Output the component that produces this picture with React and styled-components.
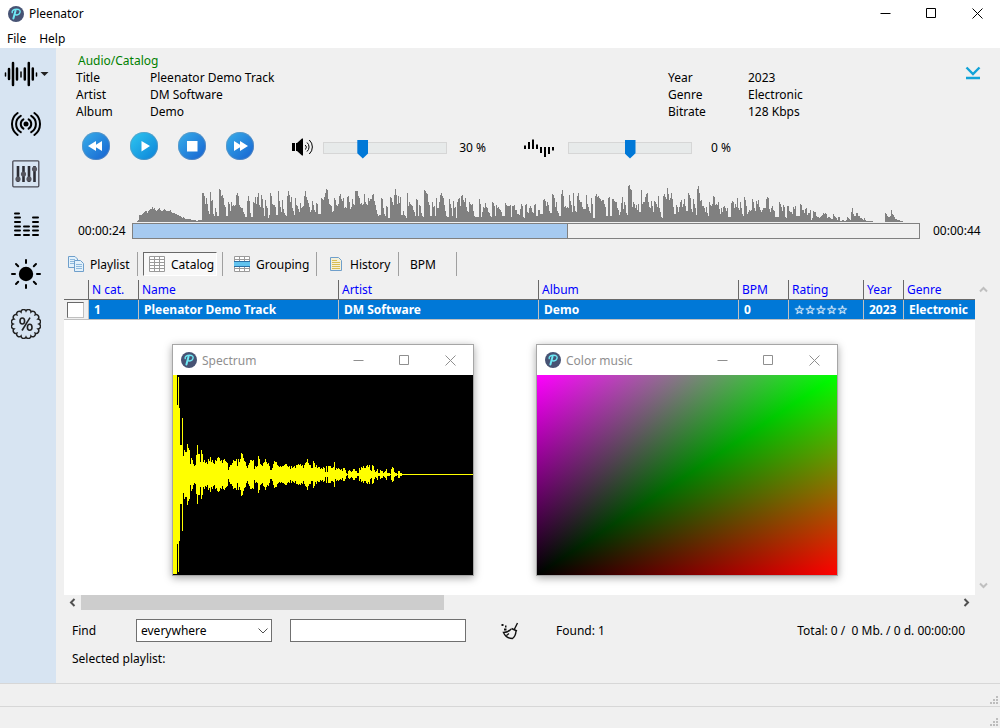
import { useState } from "react"
import styled, { createGlobalStyle } from "styled-components"

const trackPeaks = [
  [5, [1, 2, 7, 7, 7, 8, 9, 10, 11, 11, 9, 11, 12, 13, 13, 15, 13, 14, 12, 11, 12, 13, 14, 12, 11, 11, 12, 13, 12, 11, 11, 11, 11, 12, 10, 9, 9, 9, 8, 8, 7, 7, 6, 6, 5, 4, 5, 4, 3, 3, 3, 3, 3, 3, 2, 2, 2, 2, 2, 1, 1, 2, 2, 2]],
  [70, [29, 29, 26, 18, 24, 18, 11, 8]],
  [78, [30, 21, 22, 8, 6, 14, 10, 6, 6]],
  [87, [33, 32, 26, 27, 24, 17, 15, 6, 6, 20, 18, 11, 20, 16, 17, 16]],
  [103, [17, 27, 29, 26, 17, 15, 14, 14, 10, 8, 5, 5, 21, 20, 5, 5]],
  [116, [26, 21, 9, 5, 5, 20, 19, 25, 18, 15]],
  [125, [25, 29, 17, 15, 27, 23, 14, 6]],
  [133, [22, 16, 14, 4, 7, 29, 26, 18, 17, 17, 15, 7, 7]],
  [146, [31, 21, 15, 10, 22, 13, 9, 7, 6]],
  [155, [26, 31, 27, 20, 25, 14, 11, 7, 24, 17, 16, 13, 9]],
  [167, [10, 19, 14, 15, 16, 26, 31, 25, 22, 19, 15, 10, 12, 21, 20]],
  [181, [17, 12, 10, 19, 18, 8, 8]],
  [189, [24, 23, 22, 25, 29, 33, 32, 23, 18, 17, 16, 10, 11]],
  [202, [24, 22, 17, 16, 18, 26, 28, 23, 21, 24]],
  [212, [14, 15, 14, 25, 26, 20, 13, 15, 23, 18, 17]],
  [223, [31, 31, 31, 26, 24, 18, 19, 17, 18]],
  [232, [28, 20, 18, 17, 24, 21, 23, 23, 27, 28, 21, 17, 12, 8, 6, 7]],
  [249, [24, 23, 14, 8, 6, 16, 15, 4, 4]],
  [258, [25, 24, 20, 17, 27, 33, 27, 18, 26, 19]],
  [268, [25, 7, 7, 11, 7, 6, 4]],
  [275, [29, 16, 20, 18, 17, 16, 12, 10, 6]],
  [284, [23, 22, 6, 17, 16, 9, 6, 5]],
  [292, [32, 31, 29, 28, 20, 17, 6, 6, 20, 15, 16, 6]],
  [304, [24, 14, 14, 20, 27, 29, 26, 24, 17, 11, 6, 5]],
  [317, [23, 18, 14, 6, 21, 14, 15, 4, 20]],
  [326, [23, 24, 16, 26, 27, 22, 20, 24, 15, 11, 10, 20, 18, 17, 18, 11, 6, 5]],
  [347, [23, 18, 5, 10, 15, 14, 19, 15, 14, 10, 9, 6, 5]],
  [360, [20, 19, 16, 6, 17, 14, 15, 13, 12, 10, 6]],
  [373, [19, 17, 16, 16, 16, 17, 5, 16, 16, 17, 12, 12, 8, 8, 7]],
  [388, [13, 18, 16, 5, 4, 17, 18, 10, 9, 14, 16, 14, 10, 9]],
  [402, [17, 18, 6, 6, 12, 12, 8, 8]],
  [411, [22, 23, 21, 16, 20, 17, 11, 9]],
  [420, [28, 27, 24, 15, 20, 11, 9, 6, 6]],
  [429, [28, 32, 26, 15, 16, 14, 15, 14, 27, 21, 17, 10]],
  [441, [29, 16, 11, 10, 26, 29, 22, 20, 20, 15, 13, 13]],
  [454, [27, 18, 15, 11, 9, 24, 18, 4, 4]],
  [463, [26, 28, 25, 26, 24, 23, 21, 22, 22, 18, 15, 6, 6, 24, 25, 6, 6]],
  [480, [23, 23, 21, 20, 20, 14, 12, 7, 10]],
  [489, [19, 25, 13, 20, 17, 9, 7]],
  [496, [36, 37, 33, 32, 15, 20, 18, 14, 17, 12, 18, 10, 10]],
  [509, [32, 18, 20, 20, 25, 28, 29, 20, 15, 14, 21, 16, 10]],
  [522, [21, 20, 18, 15, 26, 14, 10, 5, 4]],
  [531, [26, 28, 25, 23, 34, 28, 22, 24, 29, 23, 15, 8]],
  [544, [17, 15, 10, 15, 20, 22, 15, 18, 23, 16, 11]],
  [556, [29, 27, 24, 13, 10, 23, 18, 14, 7, 5]],
  [565, [33, 36, 29, 21, 22, 16, 16, 14, 10, 15, 9, 6, 20, 17, 16]],
  [580, [18, 26, 25, 17, 18, 17, 20, 13, 8, 14, 10]],
  [591, [15, 16, 14, 11, 14, 5, 5, 5, 19, 21, 20, 14, 18, 15, 24]],
  [606, [14, 12, 20, 14, 8, 6, 25, 22, 16, 8, 10, 12, 11, 12, 23, 20]],
  [622, [14, 11, 21, 18, 22, 15, 12, 10, 12, 14]],
  [634, [23, 25, 24, 13, 10, 14, 16, 12, 11, 5, 5, 5]],
  [647, [20, 18, 15, 11, 17, 15, 5, 4, 16, 16, 11, 10, 10]],
  [660, [8, 15, 13, 16, 6, 6, 6, 6, 18, 17, 12, 12, 9, 13, 14, 7, 9, 9, 12, 2]],
  [680, [4, 11, 10, 10, 6, 5, 5, 4, 5, 6, 7, 9, 8, 9, 8, 4, 5, 5, 4, 3]],
  [701, [8, 6, 5, 4, 2, 5, 5, 1, 1, 2, 2, 1, 1, 2, 5, 4, 3, 2]],
  [719, [10, 14, 8, 6, 6, 9, 9, 6, 6, 4, 4, 3, 2, 4, 2, 1, 1, 1, 1, 1, 1, 1]],
  [741, [0]],
  [753, [9, 8, 6, 5, 5, 6, 12, 8, 7, 5, 3, 3, 2, 2, 2, 1, 1, 1, 0]],
]

const spectrumLevels = [
  99, 99, 99, 99, 69, 97, 66, 29, 29, 56, 18, 24, 22, 22, 30, 26, 24, 10, 16, 14, 10, 8, 9,
  19, 29, 20, 20, 12, 24, 20, 12, 14, 11, 12, 10, 15, 13, 17, 12, 14, 11, 10, 14, 13, 16, 17, 16,
  13, 14, 11, 14, 15, 13, 12, 11, 4, 7, 9, 9, 11, 14, 13, 13, 15, 8, 15, 12, 15, 21, 20,
  16, 13, 12, 8, 6, 9, 11, 14, 14, 13, 14, 5, 8, 7, 8, 18, 15, 10, 9, 8, 11, 12, 15, 12, 10, 11,
  8, 4, 4, 6, 10, 13, 12, 12, 9, 8, 7, 8, 7, 8, 8, 9, 10, 10, 8, 7, 8, 5, 8, 6, 7, 8, 6, 9, 9,
  10, 9, 10, 8, 9, 6, 9, 11, 12, 15, 11, 9, 9, 6, 6, 13, 11, 7, 9, 6, 7, 7, 5, 6, 5, 7, 6,
  2, 8, 2, 8, 8, 8, 6, 6, 7, 12, 4, 6, 5, 6, 5, 4, 5, 3, 6, 6, 4, 1, 0, 3, 4, 3, 2, 3, 5, 5,
  3, 3, 1, 1, 6, 4, 7, 6, 8, 6, 6, 8, 9, 7, 9, 4, 3, 9, 8, 4, 2, 3, 5, 1, 1, 4, 3, 3, 1, 2, 3,
  5, 1, 1, 1, 0, 5, 7, 6, 2, 1, 1, 0, 3, 3, 1, 1, 0,
]

// every block holds its last level until the next block starts
function wavePath() {
  let d = "M0 39"
  trackPeaks.forEach(([start, levels], i) => {
    const end = i + 1 < trackPeaks.length ? trackPeaks[i + 1][0] : start + levels.length
    for (let x = start; x < end; x++) {
      const h = levels[Math.min(x - start, levels.length - 1)]
      d += `H${x}V${39 - h}`
    }
    d += `H${end}`
  })
  return d + "V39Z"
}

function spectrumPath() {
  return spectrumLevels.map((h, x) => `M${x} ${99 - h}h1V${100 + h}h-1Z`).join("")
}

function scallopPath() {
  const points = 16
  let d = ""
  for (let i = 0; i <= points; i++) {
    const a = (i / points) * Math.PI * 2
    const x = (15 + 13 * Math.cos(a)).toFixed(2)
    const y = (15 + 13 * Math.sin(a)).toFixed(2)
    d += i === 0 ? `M${x} ${y}` : `A2.6 2.6 0 0 1 ${x} ${y}`
  }
  return d + "Z"
}

function Logo() {
  return (
    <svg width="16" height="16" viewBox="0 0 16 16" aria-hidden="true">
      <circle cx="8" cy="8" r="8" fill="#475374" />
      <g fill="none" stroke="#6fe9f5" strokeLinecap="round">
        <path d="M7.6 4.6L5.4 12.6" strokeWidth="2" />
        <path d="M4.2 6.6C3.6 4.4 6 3.2 8.6 3.2C11.4 3.2 12.6 4.6 12 6.4C11.5 8.2 9.6 9.2 7.6 8.8" strokeWidth="1.4" />
      </g>
    </svg>
  )
}

function WindowButtons({ title }) {
  return (
    <Controls>
      <ControlButton aria-label={`Minimize ${title}`}>
        <svg width="11" height="11" viewBox="0 0 11 11">
          <path d="M.5 5.5H10.5" />
        </svg>
      </ControlButton>
      <ControlButton aria-label={`Maximize ${title}`}>
        <svg width="11" height="11" viewBox="0 0 11 11">
          <path d="M.5 .5H9.5V9.5H.5Z" />
        </svg>
      </ControlButton>
      <ControlButton aria-label={`Close ${title}`}>
        <svg width="11" height="11" viewBox="0 0 11 11">
          <path d="M.5 .5L10.5 10.5M10.5 .5L.5 10.5" />
        </svg>
      </ControlButton>
    </Controls>
  )
}

function Arrow({ d, color }) {
  return (
    <svg width="9" height="9" viewBox="0 0 9 9" aria-hidden="true">
      <path d={d} fill="none" stroke={color} strokeWidth="2" />
    </svg>
  )
}

function SideBar() {
  return (
    <Side>
      <SideButton aria-label="Audio">
        <svg width="52" height="30" viewBox="0 0 52 30">
          <path d="M5.5 14V17M21 13V18M36.5 14V17" stroke="#000" strokeWidth="1.5" strokeLinecap="round" />
          <path
            d="M9 10V20M13 4V26M17 9.5V20.5M24.8 9.5V20.5M28.8 4V26M32.8 9.5V20.5"
            stroke="#000"
            strokeWidth="2.5"
            strokeLinecap="round"
          />
          <path d="M40.5 13H48.5L44.5 17Z" fill="#222" />
        </svg>
      </SideButton>
      <SideButton aria-label="Radio">
        <svg width="30" height="30" viewBox="0 0 30 30" fill="none" stroke="#000" strokeWidth="2" strokeLinecap="round">
          <circle cx="15" cy="15" r="2.5" fill="#000" stroke="none" />
          <path d="M12.4 10.3A5.5 5.5 0 0 0 12.4 19.7M17.6 10.3A5.5 5.5 0 0 1 17.6 19.7" />
          <path d="M9.8 6.8A9.5 9.5 0 0 0 9.8 23.2M20.2 6.8A9.5 9.5 0 0 1 20.2 23.2" />
          <path d="M6.6 4A13.6 13.6 0 0 0 6.6 26M23.4 4A13.6 13.6 0 0 1 23.4 26" />
        </svg>
      </SideButton>
      <SideButton aria-label="Mixer">
        <svg width="30" height="30" viewBox="0 0 30 30">
          <rect x="1.8" y="1.8" width="26" height="26" rx="1" fill="none" stroke="#4a4a54" strokeWidth="1.3" />
          <path d="M7 7V23M12.5 7V23M18 7V23M23.5 7V23" stroke="#2c2c34" strokeWidth="2.6" />
          <g fill="#55555e">
            <circle cx="7" cy="20" r="2.6" />
            <circle cx="12.5" cy="15" r="2.6" />
            <circle cx="18" cy="20" r="2.6" />
            <circle cx="23.5" cy="10" r="2.6" />
          </g>
        </svg>
      </SideButton>
      <SideButton aria-label="Spectrum">
        <svg width="30" height="30" viewBox="0 0 30 30" stroke="#000" strokeWidth="2" strokeLinecap="round">
          <path d="M4 4.5H8M4 8.5H9M4 13H9M4 17.5H9M4 21.5H9M4 26H9" />
          <path d="M13 17.5H18M13 21.5H18M13 26H18" />
          <path d="M22 8.5H27M22 13H27M22 17.5H27M22 21.5H27M22 26H27" />
        </svg>
      </SideButton>
      <SideButton aria-label="Color music">
        <svg width="30" height="30" viewBox="0 0 30 30" stroke="#000" strokeWidth="2" strokeLinecap="round">
          <circle cx="15" cy="15" r="7.2" stroke="none" />
          <path d="M15 1V4M15 26V29M1 15H4M26 15H29M5 5L7.2 7.2M22.8 22.8L25 25M25 5L22.8 7.2M7.2 22.8L5 25" />
        </svg>
      </SideButton>
      <SideButton aria-label="Percent">
        <svg width="30" height="30" viewBox="0 0 30 30">
          <path d={scallopPath()} fill="none" stroke="#222" strokeWidth="1.5" />
          <g fill="none" stroke="#222" strokeWidth="1.6">
            <ellipse cx="11.3" cy="12" rx="2.3" ry="3" />
            <ellipse cx="18.7" cy="18.3" rx="2.3" ry="3" />
            <path d="M19 8.7L11 21.5" />
          </g>
        </svg>
      </SideButton>
    </Side>
  )
}

function Transport() {
  const [volume, setVolume] = useState(30)
  const [tempo, setTempo] = useState(0)

  return (
    <TransportRow>
      <RoundButton aria-label="Previous">
        <svg width="28" height="28" viewBox="0 0 28 28">
          <path d="M14 9L6 14L14 19ZM20 9L12 14L20 19Z" />
        </svg>
      </RoundButton>
      <RoundButton $bright aria-label="Play">
        <svg width="28" height="28" viewBox="0 0 28 28">
          <path d="M11.5 9L20 14L11.5 19.5Z" />
        </svg>
      </RoundButton>
      <RoundButton aria-label="Stop">
        <svg width="28" height="28" viewBox="0 0 28 28">
          <rect x="9" y="9" width="10.5" height="10.5" />
        </svg>
      </RoundButton>
      <RoundButton aria-label="Next">
        <svg width="28" height="28" viewBox="0 0 28 28">
          <path d="M8 9L16 14L8 19ZM14 9L22 14L14 19Z" />
        </svg>
      </RoundButton>

      <SliderGroup>
        <SliderIcon htmlFor="volume" aria-label="Volume">
          <svg width="21" height="20" viewBox="0 0 21 20">
            <path d="M0 6H3V14H0ZM4 6H5L10 1.5H11V18.5H10L5 14H4Z" />
            <path d="M13 8A2.6 2.6 0 0 1 13 12.5M15 5.5A6 6 0 0 1 15 14.5M17.3 3A9.5 9.5 0 0 1 17.3 17" fill="none" stroke="#000" />
          </svg>
        </SliderIcon>
        <Range id="volume" type="range" min="0" max="100" value={volume} onChange={(e) => setVolume(+e.target.value)} />
        <SliderValue>{volume} %</SliderValue>
      </SliderGroup>

      <SliderGroup>
        <SliderIcon htmlFor="tempo" aria-label="Tempo">
          <svg width="34" height="20" viewBox="0 0 34 20">
            <path
              d="M1 8.5V12M5 5V12M9 2.5V12M13 7.5V12M17 10V16M21 10V20M25 10V17M29 10V13.5"
              stroke="#000"
              strokeWidth="2"
            />
          </svg>
        </SliderIcon>
        <Range id="tempo" type="range" min="-50" max="50" value={tempo} onChange={(e) => setTempo(+e.target.value)} />
        <SliderValue>{tempo} %</SliderValue>
      </SliderGroup>
    </TransportRow>
  )
}

function GridIcon({ band }) {
  return (
    <svg width="16" height="16" viewBox="0 0 16 16" aria-hidden="true">
      <path
        d="M.5 .5H15.5V15.5H.5ZM.5 3.5H15.5M.5 6.5H15.5M.5 9.5H15.5M.5 12.5H15.5M5.5 .5V15.5M10.5 .5V15.5"
        fill="#fff"
        stroke="#9a9a9a"
      />
      {band && (
        <>
          <rect x="0" y="5" width="16" height="6" fill="#62c3ee" />
          <path d="M0 5.5H16M0 10.5H16" stroke="#2a6fa5" />
        </>
      )}
    </svg>
  )
}

function Tabs() {
  return (
    <TabBar>
      <Tab $width={68}>
        <svg width="16" height="16" viewBox="0 0 16 16" aria-hidden="true">
          <path d="M.5 .5H7L9.5 3V11.5H.5Z" fill="#e3f1fb" stroke="#6f9fcb" />
          <path d="M2 3.5H7M2 5.5H6M2 7.5H6" stroke="#8fb9dc" />
          <path d="M6.5 4.5H12.5L15.5 7.5V15.5H6.5Z" fill="#e3f1fb" stroke="#6f9fcb" />
          <path d="M8 8.5H14M8 10.5H14M8 12.5H14" stroke="#8fb9dc" />
        </svg>
        Playlist
      </Tab>
      <TabDivider />
      <Tab $width={74} $pressed>
        <GridIcon />
        Catalog
      </Tab>
      <TabDivider />
      <Tab $width={83}>
        <GridIcon band />
        Grouping
      </Tab>
      <TabDivider />
      <Tab $width={71}>
        <svg width="16" height="16" viewBox="0 0 16 16" aria-hidden="true">
          <path d="M2.5 1.5H10.5L13.5 4.5V14.5H2.5Z" fill="#f5f0d8" stroke="#6f9fcb" />
          <path d="M4 4.5H9M4 6.5H12M4 8.5H12M4 10.5H12M4 12.5H12" stroke="#d8bd55" />
        </svg>
        History
      </Tab>
      <TabDivider />
      <Tab $width={47}>BPM</Tab>
      <TabDivider />
    </TabBar>
  )
}

function Catalog() {
  return (
    <CatalogArea>
      <TableArea>
        <Table>
          <colgroup>
            <col width="24" />
            <col width="50" />
            <col width="200" />
            <col width="200" />
            <col width="200" />
            <col width="50" />
            <col width="75" />
            <col width="40" />
            <col />
          </colgroup>
          <thead>
            <tr>
              <Th aria-label="Selected" />
              <Th>N cat.</Th>
              <Th>Name</Th>
              <Th>Artist</Th>
              <Th>Album</Th>
              <Th>BPM</Th>
              <Th>Rating</Th>
              <Th>Year</Th>
              <Th>Genre</Th>
            </tr>
          </thead>
          <tbody>
            <tr>
              <CheckCell>
                <Check type="checkbox" aria-label="Select Pleenator Demo Track" />
              </CheckCell>
              <Td>1</Td>
              <Td>Pleenator Demo Track</Td>
              <Td>DM Software</Td>
              <Td>Demo</Td>
              <Td>0</Td>
              <Td>
                <Stars>☆☆☆☆☆</Stars>
              </Td>
              <Td>2023</Td>
              <Td>Electronic</Td>
            </tr>
          </tbody>
        </Table>
      </TableArea>
      <VerticalScroll>
        <Arrow d="M1 6.5L4.5 3L8 6.5" color="#bfbfbf" />
        <Arrow d="M1 2.5L4.5 6L8 2.5" color="#bfbfbf" />
      </VerticalScroll>
    </CatalogArea>
  )
}

function ToolWindow({ title, left, children }) {
  return (
    <Tool $left={left}>
      <ToolTitle>
        <Logo />
        <TitleText>{title}</TitleText>
        <WindowButtons title={title} />
      </ToolTitle>
      {children}
    </Tool>
  )
}

function Grip() {
  return (
    <svg width="8" height="8" viewBox="0 0 8 8" aria-hidden="true">
      <path d="M6 0h2v2h-2zM3 3h2v2h-2zM6 3h2v2h-2zM0 6h2v2h-2zM3 6h2v2h-2zM6 6h2v2h-2z" fill="#bdbdbd" />
    </svg>
  )
}

export default function App() {
  return (
    <Window>
      <GlobalStyle />
      <TitleBar>
        <Logo />
        <TitleText>Pleenator</TitleText>
        <WindowButtons title="Pleenator" />
      </TitleBar>
      <MenuBar>
        <MenuItem>File</MenuItem>
        <MenuItem>Help</MenuItem>
      </MenuBar>

      <Workspace>
        <SideBar />
        <Main>
          <Info>
            <InfoList>
              <Source>Audio/Catalog</Source>
              <dt>Title</dt>
              <dd>Pleenator Demo Track</dd>
              <dt>Artist</dt>
              <dd>DM Software</dd>
              <dt>Album</dt>
              <dd>Demo</dd>
            </InfoList>
            <InfoDetails>
              <dt>Year</dt>
              <dd>2023</dd>
              <dt>Genre</dt>
              <dd>Electronic</dd>
              <dt>Bitrate</dt>
              <dd>128 Kbps</dd>
            </InfoDetails>
            <Collapse aria-label="Collapse">
              <svg width="16" height="14" viewBox="0 0 16 14" fill="none" stroke="#12a3d8" strokeWidth="2.4">
                <path d="M1.5 1.5L8 8L14.5 1.5M1 12H15" />
              </svg>
            </Collapse>
          </Info>

          <Transport />

          <Seek>
            <Wave viewBox="0 0 788 39" preserveAspectRatio="none" shapeRendering="crispEdges" aria-hidden="true">
              <path d={wavePath()} fill="#808080" />
            </Wave>
            <span>00:00:24</span>
            <Progress value="435" max="786" aria-label="Position" />
            <EndTime>00:00:44</EndTime>
          </Seek>

          <Tabs />
          <Catalog />
          <HorizontalScroll>
            <Arrow d="M6.5 1L3 4.5L6.5 8" color="#505050" />
            <ScrollTrack>
              <ScrollThumb />
            </ScrollTrack>
            <Arrow d="M2.5 1L6 4.5L2.5 8" color="#505050" />
          </HorizontalScroll>

          <FindRow>
            <FindLabel htmlFor="scope">Find</FindLabel>
            <SelectBox>
              <Select id="scope" defaultValue="everywhere">
                <option>everywhere</option>
              </Select>
              <svg width="10" height="6" viewBox="0 0 10 6" aria-hidden="true">
                <path d="M.5 .5L5 5L9.5 .5" fill="none" stroke="#505050" />
              </svg>
            </SelectBox>
            <FindInput type="text" aria-label="Search text" />
            <ClearButton type="button" aria-label="Clear">
              <svg width="18" height="18" viewBox="0 0 18 18" fill="none" stroke="#111" strokeWidth="1.4">
                <path d="M16.5 1L13.5 7M10.5 6.5L16 9M10 7C8 9.5 5.5 10.5 2.5 10.5C4 14 7 16.5 11.5 16.5C13.5 15 14.8 12.5 15 9M5.5 13.5L8 11.5" />
                <path d="M.5 3H2.5M4 4.5H5.5M3 7.5H5.5" strokeWidth="2" />
              </svg>
            </ClearButton>
            <span>Found: 1</span>
            <Total>Total: 0 /&nbsp; 0 Mb. / 0 d. 00:00:00</Total>
          </FindRow>
          <Selected>Selected playlist:</Selected>
        </Main>
      </Workspace>

      <StatusBar>
        <Grip />
      </StatusBar>
      <StatusBar>
        <Grip />
      </StatusBar>

      <ToolWindow title="Spectrum" left={172}>
        <SpectrumView viewBox="0 0 300 200" shapeRendering="crispEdges" role="img" aria-label="Spectrum">
          <path d={spectrumPath()} fill="#ff0" />
          <rect x="0" y="99" width="300" height="1" fill="#ff0" />
        </SpectrumView>
      </ToolWindow>
      <ToolWindow title="Color music" left={536}>
        <ColorView />
      </ToolWindow>
    </Window>
  )
}

const GlobalStyle = createGlobalStyle`
  * {
    box-sizing: border-box;
  }

  body {
    margin: 0;
    font: 12px/17px "Noto Sans", "Open Sans", sans-serif;
    color: #000;
  }

  button, input, select {
    margin: 0;
    padding: 0;
    border: 0;
    border-radius: 0;
    background: none;
    font: inherit;
    color: inherit;
  }

  svg {
    display: block;
    flex-shrink: 0;
  }
`

const Window = styled.div`
  position: relative;
  display: flex;
  flex-direction: column;
  min-height: 100vh;
  background: #f0f0f0;
`

const TitleBar = styled.header`
  display: flex;
  align-items: center;
  height: 27px;
  padding-left: 8px;
  background: #fff;
`

const TitleText = styled.span`
  margin-left: 5px;
`

const Controls = styled.div`
  display: flex;
  margin-left: auto;
`

const ControlButton = styled.button`
  display: flex;
  align-items: center;
  justify-content: center;
  width: 46px;
  height: 26px;

  path {
    fill: none;
    stroke: currentColor;
  }
`

const MenuBar = styled.nav`
  display: flex;
  gap: 13px;
  height: 21px;
  padding-left: 7px;
  background: #fff;
`

const MenuItem = styled.button`
  height: 21px;
  padding-top: 2px;
`

const Workspace = styled.div`
  display: flex;
  flex: 1;
`

const Side = styled.aside`
  flex-shrink: 0;
  width: 56px;
  padding-top: 1px;
  background: #d7e4f2;
`

const SideButton = styled.button`
  display: flex;
  align-items: center;
  justify-content: center;
  width: 52px;
  height: 50px;
`

const Main = styled.main`
  display: flex;
  flex: 1;
  flex-direction: column;
  min-width: 0;
  padding: 4px 8px 16px;
`

const Info = styled.section`
  display: flex;
  align-items: flex-start;
  padding: 0 11px 0 12px;
`

const InfoList = styled.dl`
  display: grid;
  flex: 1;
  grid-template-columns: 74px 1fr;
  margin: 0;

  dd {
    margin: 0;
  }
`

const InfoDetails = styled(InfoList)`
  flex: 0 0 297px;
  grid-template-columns: 80px 1fr;
  padding-top: 17px;
`

const Source = styled.dt`
  grid-column: 1 / -1;
  padding-left: 2px;
  color: #008000;
`

const Collapse = styled.button`
  margin-top: 14px;
`

const TransportRow = styled.section`
  display: flex;
  align-items: center;
  gap: 20px;
  margin-top: 12px;
  padding-left: 18px;
`

const RoundButton = styled.button`
  width: 28px;
  height: 28px;
  border-radius: 50%;
  background: ${(p) =>
    p.$bright ? "linear-gradient(135deg, #30c8f0, #0a80d8)" : "linear-gradient(135deg, #38b0ea, #1560d0)"};
  box-shadow: inset 0 0 0 1px rgba(120, 150, 180, 0.5);
  fill: #fff;
`

const SliderGroup = styled.div`
  display: flex;
  align-items: center;
  padding: 2px 0 0 18px;
`

const SliderIcon = styled.label`
  display: block;
  margin-right: 10px;
`

const Range = styled.input`
  width: 124px;
  height: 20px;
  margin: 1px 0 0;
  appearance: none;

  &::-webkit-slider-runnable-track {
    height: 12px;
    border: 1px solid #d6d6d6;
    background: #e7eaea;
  }

  &::-webkit-slider-thumb {
    width: 11px;
    height: 19px;
    margin-top: -3px;
    appearance: none;
    background: #0078d7;
    clip-path: polygon(0 0, 100% 0, 100% 72%, 50% 100%, 0 72%);
  }
`

const SliderValue = styled.output`
  width: 39px;
  text-align: right;
  white-space: nowrap;
`

const Seek = styled.section`
  display: grid;
  grid-template-columns: 54px 1fr 72px;
  align-items: end;
  margin-top: 23px;
  padding-left: 14px;
`

const Wave = styled.svg`
  grid-column: 2;
  width: 100%;
  height: 39px;

  & + span {
    grid-column: 1;
  }
`

const Progress = styled.progress`
  display: block;
  width: 100%;
  height: 16px;
  border: 1px solid #808080;
  background: #f0f0f0;
  appearance: none;

  &::-webkit-progress-bar {
    background: #f0f0f0;
  }

  &::-webkit-progress-value {
    border-right: 1px solid #808080;
    background: #a6caf0;
  }
`

const EndTime = styled.span`
  padding-left: 13px;
`

const TabBar = styled.nav`
  display: flex;
  align-items: center;
  height: 28px;
  margin: 11px 0 2px;
`

const Tab = styled.button`
  display: flex;
  align-items: center;
  gap: 6px;
  min-width: ${(p) => p.$width}px;
  height: 24px;
  padding-left: 5px;
  border: 1px solid;
  border-color: ${(p) => (p.$pressed ? "#696969 #fff #fff #696969" : "transparent")};
  background: ${(p) => (p.$pressed ? "#f8f8f8" : "none")};

  &:first-child {
    padding-left: 3px;
  }
`

const TabDivider = styled.span`
  width: 1px;
  height: 24px;
  margin: 0 5px;
  background: #a0a0a0;
`

const CatalogArea = styled.div`
  display: flex;
  flex: 1;
`

const TableArea = styled.div`
  flex: 1;
  min-width: 0;
  background: #fff;
`

const Table = styled.table`
  width: 100%;
  table-layout: fixed;
  border-collapse: separate;
  border-spacing: 0;
`

const Th = styled.th`
  height: 20px;
  padding: 0 0 0 3px;
  border-bottom: 1px solid #696969;
  background: #f0f0f0;
  color: #00f;
  font-weight: 400;
  text-align: left;
  white-space: nowrap;

  & + & {
    border-left: 1px solid #696969;
  }
`

const Td = styled.td`
  height: 20px;
  padding: 0 0 0 5px;
  border-bottom: 1px solid #c0c0c0;
  border-left: 1px solid #c0c0c0;
  background: #0078d7;
  color: #fff;
  font-weight: 700;
  white-space: nowrap;
`

const CheckCell = styled(Td)`
  padding: 0 0 0 3px;
  border-left: 0;
  background: #f0f0f0;
`

const Check = styled.input`
  display: block;
  width: 17px;
  height: 16px;
  border: 1px solid;
  border-color: #696969 #c0c0c0 #c0c0c0 #696969;
  background: #fff;
  appearance: none;
`

const Stars = styled.span`
  font-family: "DejaVu Sans", sans-serif;
  text-shadow: 0 0 1px #fff, 0 0 1px #fff;
`

const VerticalScroll = styled.div`
  display: flex;
  flex-direction: column;
  align-items: center;
  justify-content: space-between;
  width: 17px;
  padding: 5px 0;
`

const HorizontalScroll = styled.div`
  display: flex;
  align-items: center;
  gap: 4px;
  height: 15px;
  margin-right: 17px;
  padding: 0 4px;
`

const ScrollTrack = styled.div`
  flex: 1;
  height: 15px;
`

const ScrollThumb = styled.div`
  width: 41.4%;
  height: 15px;
  background: #cdcdcd;
`

const FindRow = styled.form`
  display: flex;
  align-items: center;
  margin-top: 9px;
  padding: 0 27px 0 8px;
`

const FindLabel = styled.label`
  width: 64px;
`

const SelectBox = styled.div`
  display: grid;
  align-items: center;
  width: 136px;
  margin-right: 18px;
  border: 1px solid #707070;
  background: #fff;

  > * {
    grid-area: 1 / 1;
  }

  svg {
    justify-self: end;
    margin-right: 3px;
    pointer-events: none;
  }
`

const Select = styled.select`
  width: 100%;
  height: 21px;
  padding-left: 4px;
  appearance: none;
`

const FindInput = styled.input`
  width: 176px;
  height: 23px;
  padding: 0 4px;
  border: 1px solid #707070;
  background: #fff;
`

const ClearButton = styled.button`
  margin: 0 37px 0 35px;
`

const Total = styled.span`
  margin-left: auto;
`

const Selected = styled.div`
  margin-top: 8px;
  padding-left: 8px;
`

const StatusBar = styled.footer`
  display: flex;
  align-items: flex-end;
  justify-content: flex-end;
  height: 23px;
  padding: 0 2px 2px;
  border-top: 1px solid #d7d7d7;

  & + & {
    height: 22px;
  }
`

const Tool = styled.section`
  position: absolute;
  top: 344px;
  left: ${(p) => p.$left}px;
  width: 302px;
  border: 1px solid #a6a6a6;
  background: #fff;
  box-shadow: 0 2px 8px rgba(0, 0, 0, 0.35);
`

const ToolTitle = styled.header`
  display: flex;
  align-items: center;
  height: 30px;
  padding-left: 8px;
  color: #8f8f8f;
`

const SpectrumView = styled.svg`
  width: 100%;
  height: 200px;
  background: #000;
`

// magenta and red meet at the diagonal, green is the lower of the two green ramps
const ColorView = styled.div`
  height: 200px;
  background-image: linear-gradient(to top left, #f00, #000 50%, #f0f), linear-gradient(to right, #000, #0f0),
    linear-gradient(to top, #000, #0f0);
  background-blend-mode: screen, darken, normal;
`
